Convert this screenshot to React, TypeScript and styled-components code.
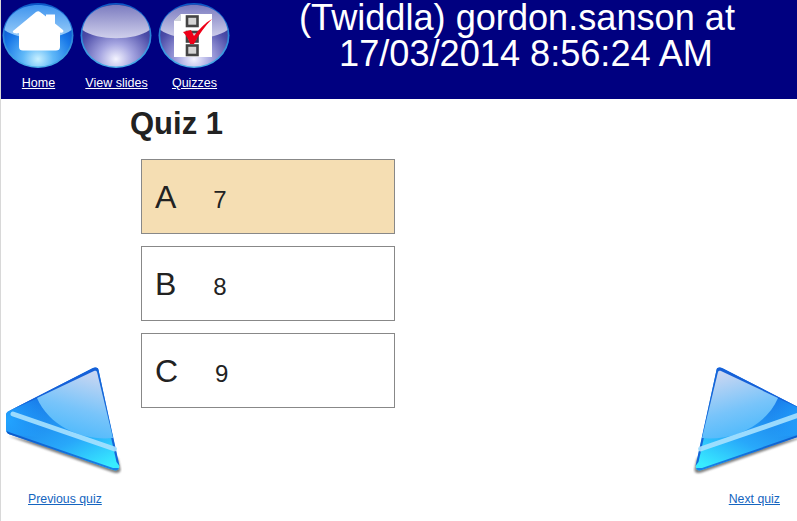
import { FC } from 'react';
import styled, { createGlobalStyle } from 'styled-components';

const GlobalStyle = createGlobalStyle`
  html, body {
    margin: 0;
    padding: 0;
    background: #fff;
    font-family: "Liberation Sans", Arial, sans-serif;
  }
`

const Page = styled.div`
  width: 797px;
  height: 521px;
  box-sizing: border-box;
  border-left: 1px solid #d8d8d8;
  overflow: hidden;
  display: flex;
  flex-direction: column;
`

const Header = styled.header`
  height: 99px;
  flex: none;
  background: #000080;
  display: flex;
`

const NavList = styled.nav`
  display: flex;
  flex: none;
  gap: 5px;
`

const NavItem = styled.a`
  width: 73px;
  display: flex;
  flex-direction: column;
  align-items: center;
  color: #fff;
  font-size: 12.5px;
  line-height: 14px;
  white-space: nowrap;
  text-decoration: underline;
`

const NavLabel = styled.span`
  margin-left: 2px;
`

const Orb = styled.svg`
  width: 73px;
  height: 76px;
  flex: none;
`

const Title = styled.h1`
  flex: 1;
  margin: 0;
  padding: 0 0 0 7px;
  text-align: center;
  color: #fff;
  font-size: 36.15px;
  font-weight: 400;
  line-height: 36px;
`

const TitleLine = styled.span<{ $indent?: boolean }>`
  display: block;
  ${(p) => p.$indent && 'padding-left: 18px;'}
`

const Body = styled.main`
  flex: 1;
  display: flex;
  justify-content: space-between;
  min-height: 0;
`

const Side = styled.div<{ $right?: boolean }>`
  width: 129px;
  flex: none;
  display: flex;
  flex-direction: column;
  justify-content: flex-end;
  align-items: ${(p) => (p.$right ? 'flex-end' : 'flex-start')};
  padding-bottom: 15px;
`

const Arrow = styled.svg<{ $right?: boolean }>`
  width: 122px;
  height: 115px;
  flex: none;
  margin-bottom: 12px;
  ${(p) => (p.$right ? 'transform: scaleX(-1); margin-right: -18px;' : 'margin-left: -1px;')}
`

const PagerLink = styled.a<{ $right?: boolean }>`
  color: #1565c0;
  font-size: 12.3px;
  line-height: 14px;
  white-space: nowrap;
  text-decoration: underline;
  ${(p) => (p.$right ? 'margin-right: 17px;' : 'margin-left: 27px;')}
`

const Quiz = styled.section`
  flex: 1;
  color: #222;
`

const QuizTitle = styled.h2`
  margin: 7px 0 17px;
  font-size: 31px;
  line-height: 36px;
  font-weight: 700;
  color: #222;
`

const Options = styled.div`
  margin-left: 11px;
  display: flex;
  flex-direction: column;
  gap: 12px;
`

const Option = styled.div<{ $selected?: boolean }>`
  width: 254px;
  height: 75px;
  box-sizing: border-box;
  border: 1px solid #888;
  background: ${(p) => (p.$selected ? '#f5deb3' : '#fff')};
  display: flex;
  align-items: center;
  padding-left: 13px;
`

const Letter = styled.span`
  margin-right: 37px;
  font-size: 32px;
  line-height: 36px;
`

const Answer = styled.span`
  font-size: 24px;
  line-height: 28px;
  margin-top: 7px;
`

const orbGradients = (
  <defs>
    <radialGradient id="blueOrb" cx="50%" cy="88%" r="75%">
      <stop offset="0" stopColor="#c8f0ff" />
      <stop offset="0.3" stopColor="#5fb8f8" />
      <stop offset="0.7" stopColor="#1878e8" />
      <stop offset="1" stopColor="#0a4fc8" />
    </radialGradient>
    <linearGradient id="blueGloss" x1="0" y1="0" x2="0" y2="1">
      <stop offset="0" stopColor="#3f94ee" />
      <stop offset="1" stopColor="#9ed0fa" />
    </linearGradient>
    <radialGradient id="violetOrb" cx="50%" cy="88%" r="72%">
      <stop offset="0" stopColor="#f4f4ff" />
      <stop offset="0.35" stopColor="#a4a4e0" />
      <stop offset="0.8" stopColor="#4c4ca8" />
      <stop offset="1" stopColor="#3c3c98" />
    </radialGradient>
    <linearGradient id="violetGloss" x1="0" y1="0" x2="0" y2="1">
      <stop offset="0" stopColor="#7c7cc0" />
      <stop offset="1" stopColor="#d0d0ec" />
    </linearGradient>
    <linearGradient id="rim" x1="0" y1="0" x2="0" y2="1">
      <stop offset="0" stopColor="#0a58c8" />
      <stop offset="1" stopColor="#4ab0e8" />
    </linearGradient>
  </defs>
)

const OrbBase: FC<{ base: string; gloss: string }> = ({ base, gloss }) => (
  <>
    <ellipse cx="37" cy="35.5" rx="35.5" ry="32.5" fill="url(#rim)" />
    <ellipse cx="37" cy="35.5" rx="33.8" ry="31" fill={`url(#${base})`} />
    <path d="M3.5 30 C6 14 20 5 37 5 C54 5 68 14 70.5 30 C56 41 18 41 3.5 30 Z" fill={`url(#${gloss})`} />
  </>
)

const HomeOrb: FC = () => (
  <Orb viewBox="0 0 73 76">
    {orbGradients}
    <OrbBase base="blueOrb" gloss="blueGloss" />
    <path
      d="M12 31 L35 12 C36.5 11 38 11 39 12 L45 16.5 V14.5 H54 V23.5 L62 30 C63.5 32 61 33.5 59 32.5 V47 C59 49.5 57.5 50.5 55 50.5 H22 C19.5 50.5 18 49.5 18 47 V33 C15 34 11 33 12 31 Z"
      fill="#fff"
    />
  </Orb>
)

const SlidesOrb: FC = () => (
  <Orb viewBox="0 0 73 76">
    <OrbBase base="violetOrb" gloss="violetGloss" />
  </Orb>
)

const QuizzesOrb: FC = () => (
  <Orb viewBox="0 0 73 76">
    <OrbBase base="violetOrb" gloss="violetGloss" />
    <path d="M24 14 H55 V57 H17 V21 Z" fill="#fff" />
    <path d="M17 21 L24 14 V21 Z" fill="#cfd2da" />
    <g fill="#d4d4d4" stroke="#444" strokeWidth="2.6">
      <rect x="30" y="16.5" width="10.5" height="9.5" />
      <rect x="30" y="32" width="10.5" height="9.5" />
      <rect x="30" y="45.5" width="10.5" height="9.5" />
    </g>
    <path d="M26 32 L34 30 L37 36 C42 29 48 23 55 19 C48 26 42 34 37 44 L33 44 C32 40 29 35 26 32 Z" fill="#ee0018" />
  </Orb>
)

const ArrowShape: FC<{ id: string }> = ({ id }) => (
  <>
    <defs>
      <linearGradient id={`${id}Body`} gradientUnits="userSpaceOnUse" x1="60" y1="385" x2="100" y2="470">
        <stop offset="0" stopColor="#1878e8" />
        <stop offset="0.6" stopColor="#28a8fa" />
        <stop offset="1" stopColor="#38ecff" />
      </linearGradient>
      <radialGradient id={`${id}Lit`} gradientUnits="userSpaceOnUse" cx="8" cy="420" r="38">
        <stop offset="0" stopColor="#22a4ff" />
        <stop offset="1" stopColor="#22a4ff" stopOpacity="0" />
      </radialGradient>
      <linearGradient id={`${id}Gloss`} gradientUnits="userSpaceOnUse" x1="90" y1="372" x2="70" y2="440">
        <stop offset="0" stopColor="#c8d6f2" />
        <stop offset="0.55" stopColor="#78c4fa" />
        <stop offset="1" stopColor="#48b8fc" />
      </linearGradient>
      <linearGradient id={`${id}Edge`} gradientUnits="userSpaceOnUse" x1="6" y1="430" x2="115" y2="470">
        <stop offset="0" stopColor="#0e58c8" />
        <stop offset="1" stopColor="#1a80e8" />
      </linearGradient>
      <filter id={`${id}Blur`} x="-10%" y="-20%" width="120%" height="140%">
        <feGaussianBlur stdDeviation="1.2" />
      </filter>
    </defs>
    <path d="M8 436 L112 472 C117 474 121 473 120.5 469 L118 458 Z" fill="#555" opacity="0.75" filter={`url(#${id}Blur)`} />
    <path
      d="M9 411 L92 368.5 C95 367 98 367 98.5 370 L119 465 C120 470 117 471 113 470 L10 434.5 C7 433.5 6 432 6 429 V415 C6 413 7 412 9 411 Z"
      fill={`url(#${id}Body)`}
    />
    <path
      d="M9 411 L60 385 L70 440 L10 434.5 C7 433.5 6 432 6 429 V415 C6 413 7 412 9 411 Z"
      fill={`url(#${id}Lit)`}
    />
    <path d="M6.5 431 C7 433 8 434 10 434.5 L113 470 C116 471 118 470.5 119 468 L113 468 L10 432.5 Z" fill={`url(#${id}Edge)`} />
    <path d="M9 411 L92 368.5 C95 367 98 367 98.5 370 L96 371 L60 388 Z" fill="#1560d8" />
    <path d="M96 370 L98.5 370 L119.5 466 L116.5 462 Z" fill="#1565d8" />
    <path d="M37 398 L94 371 C95.5 370.5 96.5 371 97 372 L113 438 C85 441 50 428 37 398 Z" fill={`url(#${id}Gloss)`} />
    <path d="M13 414 L114.5 449" stroke="#a8e2ff" strokeWidth="5" strokeLinecap="round" opacity="0.9" />
  </>
)

export const App: FC = () => {
  return (
    <Page>
      <GlobalStyle />
      <Header>
        <NavList>
          <NavItem href="#home"><HomeOrb /><NavLabel>Home</NavLabel></NavItem>
          <NavItem href="#slides"><SlidesOrb /><NavLabel>View slides</NavLabel></NavItem>
          <NavItem href="#quizzes"><QuizzesOrb /><NavLabel>Quizzes</NavLabel></NavItem>
        </NavList>
        <Title>
          <TitleLine>(Twiddla) gordon.sanson at</TitleLine>
          <TitleLine $indent>17/03/2014 8:56:24 AM</TitleLine>
        </Title>
      </Header>
      <Body>
        <Side>
          <Arrow viewBox="0 365 122 115"><ArrowShape id="prev" /></Arrow>
          <PagerLink href="#prev">Previous quiz</PagerLink>
        </Side>
        <Quiz>
          <QuizTitle>Quiz 1</QuizTitle>
          <Options>
            <Option $selected><Letter>A</Letter><Answer>7</Answer></Option>
            <Option><Letter>B</Letter><Answer>8</Answer></Option>
            <Option><Letter>C</Letter><Answer>9</Answer></Option>
          </Options>
        </Quiz>
        <Side $right>
          <Arrow $right viewBox="0 365 122 115"><ArrowShape id="next" /></Arrow>
          <PagerLink $right href="#next">Next quiz</PagerLink>
        </Side>
      </Body>
    </Page>
  )
}

export default App;
